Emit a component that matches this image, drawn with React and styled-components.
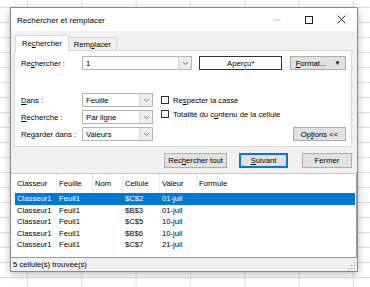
import styled, { createGlobalStyle } from "styled-components";

const Global = createGlobalStyle`
  html, body {
    margin: 0;
    padding: 0;
  }
  body {
    width: 370px;
    height: 287px;
    overflow: hidden;
    font-family: "Liberation Sans", Arial, sans-serif;
    font-size: 7.7px;
    color: #000;
    background-color: #fff;
    background-image:
      linear-gradient(to right, #dedede 1px, transparent 1px),
      linear-gradient(to bottom, #dedede 1px, transparent 1px);
    background-size: 54.33px 15px;
    background-position: 27px 7px;
  }
`;

const Sheet = styled.div`
  padding: 7px 0 0 10px;
`;

const Dialog = styled.div`
  width: 348px;
  height: 265px;
  box-sizing: border-box;
  border: 1px solid #8a8a8a;
  background: #f0f0f0;
  box-shadow: 0 2px 8px rgba(0, 0, 0, 0.28);
  display: flex;
  flex-direction: column;
`;

const TitleBar = styled.div`
  height: 23px;
  background: #fff;
  display: flex;
  align-items: center;
  padding-left: 6px;
  font-size: 8px;
`;

const Title = styled.div`
  flex: 1;
  padding-top: 1px;
`;

const WinButton = styled.div`
  width: 32px;
  height: 23px;
  display: flex;
  align-items: center;
  justify-content: center;
`;

const Tabs = styled.div`
  display: flex;
  align-items: flex-end;
  height: 17px;
  margin: 2px 0 0 4px;
`;

const Tab = styled.div`
  box-sizing: border-box;
  height: ${(p) => (p.$active ? "16px" : "13px")};
  padding: 0 ${(p) => (p.$active ? "6px" : "5px")};
  display: flex;
  align-items: center;
  background: ${(p) => (p.$active ? "#fff" : "#f0f0f0")};
  border: 1px solid #d9d9d9;
  border-bottom: none;
  ${(p) => (p.$active ? "margin-bottom: -1px; position: relative; z-index: 1;" : "border-left: none;")}
`;

const Panel = styled.div`
  background: #fff;
  border: 1px solid #d9d9d9;
  margin: 0 5px 0 3px;
  padding: 5px 5px 5px 6px;
  display: flex;
  flex-direction: column;
`;

const Row = styled.div`
  display: flex;
  align-items: center;
  height: 14px;
`;

const Label = styled.div`
  width: 61px;
  flex-shrink: 0;
`;

const Field = styled.div`
  box-sizing: border-box;
  width: ${(p) => p.$w}px;
  height: 14px;
  border: 1px solid #b5b5b5;
  background: #fff;
  display: flex;
  align-items: center;
  padding-left: 3px;
`;

const FieldText = styled.div`
  flex: 1;
`;

const Drop = styled.div`
  width: 12px;
  height: 12px;
  background: #ececec;
  border-left: 1px solid #d4d4d4;
  display: flex;
  align-items: center;
  justify-content: center;
`;

const Preview = styled.div`
  box-sizing: border-box;
  width: 83px;
  height: 14px;
  margin-left: 7px;
  border: 1px solid #333;
  background: #fff;
  display: flex;
  align-items: center;
  justify-content: center;
`;

const Button = styled.div`
  box-sizing: border-box;
  width: ${(p) => p.$w}px;
  height: ${(p) => p.$h || 15}px;
  margin-left: ${(p) => p.$ml || 0}px;
  background: #e1e1e1;
  border: 1px solid ${(p) => (p.$primary ? "#0078d7" : "#adadad")};
  ${(p) => p.$primary && "box-shadow: inset 0 0 0 1px #0078d7;"}
  display: flex;
  align-items: center;
  justify-content: center;
  gap: 8px;
  flex-shrink: 0;
`;

const Options = styled.div`
  display: flex;
  margin-top: 23px;
`;

const Selects = styled.div`
  display: flex;
  flex-direction: column;
  gap: 3px;
`;

const Checks = styled.div`
  display: flex;
  flex-direction: column;
  margin-left: 8px;
`;

const CheckRow = styled.div`
  display: flex;
  align-items: center;
  gap: 4px;
  height: 14px;
`;

const Box = styled.div`
  width: 8px;
  height: 8px;
  border: 1px solid #333;
  background: #fff;
  box-sizing: border-box;
`;

const OptionsAside = styled.div`
  flex: 1;
  display: flex;
  justify-content: flex-end;
  align-items: flex-end;
`;

const Actions = styled.div`
  display: flex;
  justify-content: flex-end;
  padding: 6px 5px 5px 0;
`;

const List = styled.div`
  flex: 1;
  background: #fff;
  border-top: 1px solid #c8c8c8;
  border-right: 1px solid #9a9a9a;
  border-bottom: 1px solid #9a9a9a;
  padding-left: 4px;
`;

const HeadRow = styled.div`
  display: grid;
  grid-template-columns: 42px 36px 30px 37px 37px 1fr;
  height: 19px;
  align-items: center;
`;

const HeadCell = styled.div`
  padding-left: 2px;
  height: 19px;
  display: flex;
  align-items: center;
  border-right: ${(p) => (p.$last ? "none" : "1px solid #e8e8e8")};
`;

const DataRow = styled.div`
  display: grid;
  grid-template-columns: 42px 36px 30px 37px 37px 1fr;
  height: 11.5px;
  align-items: center;
  margin-right: 1px;
  background: ${(p) => (p.$selected ? "#0078d7" : "transparent")};
  color: ${(p) => (p.$selected ? "#fff" : "#000")};
`;

const Cell = styled.div`
  padding-left: 2px;
  white-space: nowrap;
`;

const Status = styled.div`
  height: 13px;
  display: flex;
  align-items: center;
  padding-left: 2px;
  position: relative;
`;

const Grip = styled.svg`
  position: absolute;
  right: 1px;
  bottom: 1px;
`;

const results = [
  ["$C$2", "01-juil"],
  ["$B$3", "01-juil"],
  ["$C$5", "10-juil"],
  ["$B$6", "10-juil"],
  ["$C$7", "21-juil"],
];

const Chevron = () => (
  <svg width="7" height="5" viewBox="0 0 7 5">
    <path d="M1 1l2.5 2.5L6 1" fill="none" stroke="#707070" strokeWidth="0.9" />
  </svg>
);

const Select = ({ value }) => (
  <Field $w={71}>
    <FieldText>{value}</FieldText>
    <Drop>
      <Chevron />
    </Drop>
  </Field>
);

export default function App() {
  return (
    <Sheet>
      <Global />
      <Dialog>
        <TitleBar>
          <Title>Rechercher et remplacer</Title>
          <WinButton>
            <svg width="8" height="2"><path d="M0 1h8" stroke="#c8c8c8" strokeWidth="1" /></svg>
          </WinButton>
          <WinButton>
            <svg width="8" height="8"><rect x="0.5" y="0.5" width="7" height="7" fill="none" stroke="#222" strokeWidth="1" /></svg>
          </WinButton>
          <WinButton>
            <svg width="9" height="9"><path d="M0.5 0.5l8 8M8.5 0.5l-8 8" stroke="#222" strokeWidth="0.9" /></svg>
          </WinButton>
        </TitleBar>

        <Tabs>
          <Tab $active>
            Re<u>c</u>hercher
          </Tab>
          <Tab>
            Rem<u>p</u>lacer
          </Tab>
        </Tabs>

        <Panel>
          <Row>
            <Label>
              Re<u>c</u>hercher :
            </Label>
            <Field $w={111}>
              <FieldText>1</FieldText>
              <Drop>
                <Chevron />
              </Drop>
            </Field>
            <Preview>Aperçu*</Preview>
            <Button $w={56} $h={14} $ml={8}>
              <span>
                <u>F</u>ormat...
              </span>
              <span style={{ fontSize: "6px" }}>▼</span>
            </Button>
          </Row>

          <Options>
            <Selects>
              <Row>
                <Label>
                  <u>D</u>ans :
                </Label>
                <Select value="Feuille" />
              </Row>
              <Row>
                <Label>
                  <u>R</u>echerche :
                </Label>
                <Select value="Par ligne" />
              </Row>
              <Row>
                <Label>Regarder dans :</Label>
                <Select value="Valeurs" />
              </Row>
            </Selects>
            <Checks>
              <CheckRow>
                <Box />
                <span>
                  Re<u>s</u>pecter la casse
                </span>
              </CheckRow>
              <CheckRow>
                <Box />
                <span>
                  Totalité du c<u>o</u>ntenu de la cellule
                </span>
              </CheckRow>
            </Checks>
            <OptionsAside>
              <Button $w={53} $h={14}>
                <span>
                  Op<u>t</u>ions &lt;&lt;
                </span>
              </Button>
            </OptionsAside>
          </Options>
        </Panel>

        <Actions>
          <Button $w={63}>
            <span>
              Rec<u>h</u>ercher tout
            </span>
          </Button>
          <Button $w={49} $ml={12} $primary>
            <span>
              <u>S</u>uivant
            </span>
          </Button>
          <Button $w={50} $ml={14}>
            Fermer
          </Button>
        </Actions>

        <List>
          <HeadRow>
            <HeadCell>Classeur</HeadCell>
            <HeadCell>Feuille</HeadCell>
            <HeadCell>Nom</HeadCell>
            <HeadCell>Cellule</HeadCell>
            <HeadCell>Valeur</HeadCell>
            <HeadCell $last>Formule</HeadCell>
          </HeadRow>
          {results.map(([cell, value], i) => (
            <DataRow key={cell} $selected={i === 0}>
              <Cell>Classeur1</Cell>
              <Cell>Feuil1</Cell>
              <Cell />
              <Cell>{cell}</Cell>
              <Cell>{value}</Cell>
              <Cell />
            </DataRow>
          ))}
        </List>

        <Status>
          5 cellule(s) trouvée(s)
          <Grip width="8" height="8" viewBox="0 0 8 8">
            <g fill="#a8a8a8">
              <rect x="6" y="0" width="1.2" height="1.2" />
              <rect x="3" y="3" width="1.2" height="1.2" />
              <rect x="6" y="3" width="1.2" height="1.2" />
              <rect x="0" y="6" width="1.2" height="1.2" />
              <rect x="3" y="6" width="1.2" height="1.2" />
              <rect x="6" y="6" width="1.2" height="1.2" />
            </g>
          </Grip>
        </Status>
      </Dialog>
    </Sheet>
  );
}
